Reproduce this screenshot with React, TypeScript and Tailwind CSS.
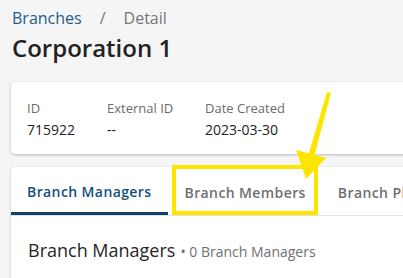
import React from "react";

const font = { fontFamily: '"Open Sans", "Noto Sans", sans-serif' };

function Field({ label, value }: { label: string; value: string }) {
  return (
    <div className="flex flex-col">
      <span className="text-[13px] leading-[18px] text-[#6b6b6b]">{label}</span>
      <span className="mt-[3px] text-[14px] leading-[19px] text-[#222]">{value}</span>
    </div>
  );
}

export default function App() {
  return (
    <div
      className="relative h-[278px] w-[403px] overflow-hidden bg-[#f5f5f5]"
      style={font}
    >
      <div className="w-[560px] pl-[11px]">
        {/* breadcrumb */}
        <div className="flex items-center pt-[7px] text-[16px] leading-[22px]">
          <span className="pl-px text-[#1d5b89]">Branches</span>
          <span className="mx-[18px] text-[#777]">/</span>
          <span className="text-[#767676]">Detail</span>
        </div>
        <h1 className="mt-[3px] pl-px text-[24px] leading-[32px] font-semibold text-[#222]">
          Corporation 1
        </h1>

        {/* info card */}
        <div className="mt-[18px] flex h-[72px] rounded-[4px] bg-white pt-[17px] pl-4 shadow-[0_1px_3px_rgba(0,0,0,0.25)]">
          <div className="w-[80px]">
            <Field label="ID" value="715922" />
          </div>
          <div className="w-[98px]">
            <Field label="External ID" value="--" />
          </div>
          <Field label="Date Created" value="2023-03-30" />
        </div>

        {/* tabs card */}
        <div className="mt-[13px] rounded-t-[4px] bg-white shadow-[0_1px_3px_rgba(0,0,0,0.2)]">
          <div className="flex border-b border-[#e2e2e2]">
            <div className="flex h-[48px] items-center border-b-[3px] border-[#0d416b] px-4 pt-[3px] text-[14px] font-semibold tracking-[0.4px] text-[#154f7c]">
              Branch Managers
            </div>
            <div className="flex h-[48px] items-center pr-4 pl-[17px] pt-[3px] text-[14px] font-semibold tracking-[0.4px] text-[#707070]">
              Branch Members
            </div>
            <div className="flex h-[48px] items-center px-4 pt-[3px] text-[14px] font-semibold tracking-[0.4px] text-[#707070]">
              Branch Places
            </div>
          </div>
          <div className="flex items-baseline px-4 pt-[22px] pb-6">
            <span className="pl-px text-[18px] leading-[24px] text-[#262626]">Branch Managers</span>
            <span className="ml-[5px] text-[14px] text-[#707070]">• 0 Branch Managers</span>
          </div>
        </div>
      </div>

      {/* annotation: highlight box */}
      <div className="absolute top-[165px] left-[172px] h-[50px] w-[146px] border-[4px] border-[#fde500]" />

      {/* annotation: arrow */}
      <svg
        className="absolute top-0 left-0"
        width="403"
        height="278"
        viewBox="0 0 403 278"
      >
        <polygon points="327,92 331,93 314,157 308,156" fill="#fde500" />
        <polygon points="296,150 326,158 306,179" fill="#fde500" />
      </svg>
    </div>
  );
}
